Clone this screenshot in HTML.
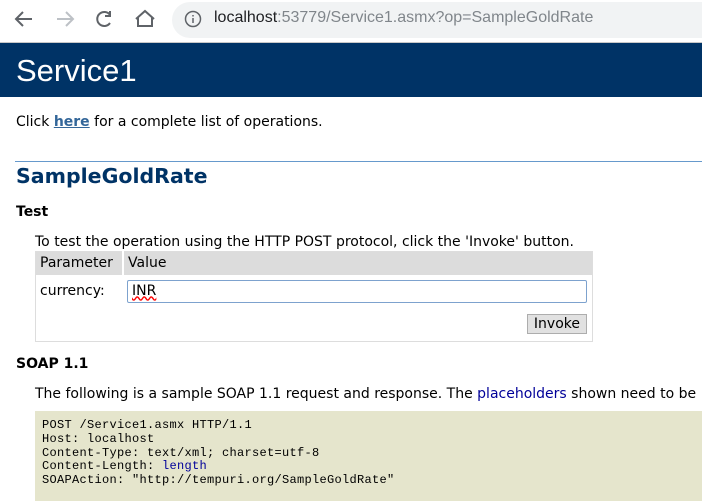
<!DOCTYPE html>
<html><head><style>
body{margin:0;width:702px;height:489px;overflow:hidden;background:#fff;font-family:Verdana,"DejaVu Sans",sans-serif;position:relative}
.a{position:absolute;white-space:nowrap}
.url{position:absolute;left:172px;top:2px;width:560px;height:36px;background:#f1f3f4;border-radius:18px}
.band{position:absolute;left:0;top:42px;width:702px;height:55px;background:#003366;border-top:1px solid #c8c8c8;box-sizing:border-box}
.t{font-size:14px;color:#000}
table{position:absolute;left:35px;top:251px;width:558px;border:1px solid #ddd;border-collapse:collapse;font-size:14px}
pre{position:absolute;left:35px;top:411px;width:680px;height:90px;margin:0;background:#e5e5cc;font-family:"Liberation Mono",monospace;font-size:12px;letter-spacing:0.3px;line-height:13.8px;padding:8px 0 0 7px;box-sizing:border-box;color:#000}
</style></head><body>
<svg class="a" style="left:0;top:0" width="170" height="40" fill="none" stroke="#5f6368" stroke-width="2">
<path d="M32 19H17M23 12l-7 7 7 7"/>
<path d="M57 19h15M66 12l7 7-7 7" stroke="#bdc1c6"/>
<path d="M110 15a7 7 0 1 0 0 8M110 11v5h-5"/>
<path d="M136 19l9-8 9 8M138 17v9h14v-9"/>
</svg>
<div class="url"></div>
<svg class="a" style="left:184px;top:10px" width="18" height="18" fill="none" stroke="#5f6368" stroke-width="1.5"><circle cx="9" cy="9" r="7.5"/><path d="M9 8v5M9 5v1.5"/></svg>
<div class="a" style="left:214px;top:9px;font-family:'Liberation Sans',sans-serif;font-size:16px;color:#80868b"><span style="color:#202124">localhost</span>:53779/Service1.asmx?op=SampleGoldRate</div>
<div class="band"></div>
<div class="a" style="left:16px;top:53px;font-size:31px;color:#fff;font-family:'Liberation Sans',sans-serif">Service1</div>
<div class="a t" style="left:16px;top:114px">Click <b style="color:#336699;text-decoration:underline">here</b> for a complete list of operations.</div>
<div class="a" style="left:15px;top:161px;width:700px;height:1px;background:#6699cc"></div>
<div class="a" style="left:16px;top:164px;font-size:20.5px;font-weight:bold;color:#003366">SampleGoldRate</div>
<div class="a" style="left:16px;top:204px;font-size:14px;font-weight:bold">Test</div>
<div class="a t" style="left:35px;top:234px">To test the operation using the HTTP POST protocol, click the 'Invoke' button.</div>
<table>
<tr style="background:#dcdcdc;height:23px"><td style="padding:0 4px;width:78px;border-right:2px solid #fff">Parameter</td><td style="padding:0 4px">Value</td></tr>
<tr style="height:33px"><td style="padding:0 4px">currency:</td><td style="padding:0 4px"><div style="width:460px;height:23px;border:1px solid #7da2ce;border-radius:2px;box-sizing:border-box;padding:2px 4px;font-size:14px"><span style="text-decoration:underline wavy red">INR</span></div></td></tr>
<tr style="height:34px"><td></td><td style="text-align:right;padding-right:5px"><span style="display:inline-block;background:#e1e1e1;border:1px solid #adadad;padding:1px 6px;font-size:14px">Invoke</span></td></tr>
</table>
<div class="a" style="left:16px;top:356px;font-size:14px;font-weight:bold">SOAP 1.1</div>
<div class="a t" style="left:35px;top:386px">The following is a sample SOAP 1.1 request and response. The <span style="color:#000099">placeholders</span> shown need to be</div>
<pre>POST /Service1.asmx HTTP/1.1
Host: localhost
Content-Type: text/xml; charset=utf-8
Content-Length: <span style="color:#000099">length</span>
SOAPAction: "http://tempuri.org/SampleGoldRate"</pre>
</body></html>
